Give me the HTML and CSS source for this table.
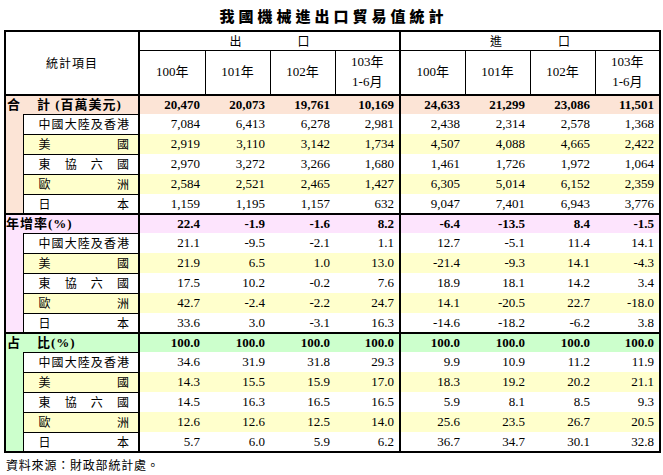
FILE: index.html
```html
<!DOCTYPE html>
<html lang="zh-Hant">
<head>
<meta charset="utf-8">
<title>我國機械進出口貿易值統計</title>
<link rel="stylesheet" href="styles.css">
</head>
<body>
<h1 class="title">我國機械進出口貿易值統計</h1>
<table class="stats">
  <colgroup>
    <col class="c-gut"><col class="c-lab"><col class="c-d1">
    <col class="c-d"><col class="c-d"><col class="c-d">
    <col class="c-d"><col class="c-d"><col class="c-d"><col class="c-d">
  </colgroup>
  <thead>
    <tr class="h1">
      <th colspan="2" rowspan="2" class="item">統計項目</th>
      <th colspan="4" class="grp div"><div class="pair"><span>出</span><span>口</span></div></th>
      <th colspan="4" class="grp"><div class="pair"><span>進</span><span>口</span></div></th>
    </tr>
    <tr class="h2">
      <th>100年</th><th>101年</th><th>102年</th><th class="div">103年<br>1-6月</th>
      <th>100年</th><th>101年</th><th>102年</th><th>103年<br>1-6月</th>
    </tr>
  </thead>
  <tbody>
    <tr class="sec total">
      <td colspan="2" class="seclab"><span class="k1">合</span>計 (百萬美元)</td>
      <td class="num">20,470</td><td class="num">20,073</td><td class="num">19,761</td><td class="num div">10,169</td>
      <td class="num">24,633</td><td class="num">21,299</td><td class="num">23,086</td><td class="num">11,501</td>
    </tr>
    <tr>
      <td rowspan="5" class="gut total"></td>
      <td class="lab"><div class="just"><span>中</span><span>國</span><span>大</span><span>陸</span><span>及</span><span>香</span><span>港</span></div></td>
      <td class="num">7,084</td><td class="num">6,413</td><td class="num">6,278</td><td class="num div">2,981</td>
      <td class="num">2,438</td><td class="num">2,314</td><td class="num">2,578</td><td class="num">1,368</td>
    </tr>
    <tr class="yel">
      <td class="lab"><div class="just"><span>美</span><span>國</span></div></td>
      <td class="num">2,919</td><td class="num">3,110</td><td class="num">3,142</td><td class="num div">1,734</td>
      <td class="num">4,507</td><td class="num">4,088</td><td class="num">4,665</td><td class="num">2,422</td>
    </tr>
    <tr>
      <td class="lab"><div class="just"><span>東</span><span>協</span><span>六</span><span>國</span></div></td>
      <td class="num">2,970</td><td class="num">3,272</td><td class="num">3,266</td><td class="num div">1,680</td>
      <td class="num">1,461</td><td class="num">1,726</td><td class="num">1,972</td><td class="num">1,064</td>
    </tr>
    <tr class="yel">
      <td class="lab"><div class="just"><span>歐</span><span>洲</span></div></td>
      <td class="num">2,584</td><td class="num">2,521</td><td class="num">2,465</td><td class="num div">1,427</td>
      <td class="num">6,305</td><td class="num">5,014</td><td class="num">6,152</td><td class="num">2,359</td>
    </tr>
    <tr>
      <td class="lab"><div class="just"><span>日</span><span>本</span></div></td>
      <td class="num">1,159</td><td class="num">1,195</td><td class="num">1,157</td><td class="num div">632</td>
      <td class="num">9,047</td><td class="num">7,401</td><td class="num">6,943</td><td class="num">3,776</td>
    </tr>

    <tr class="sec growth">
      <td colspan="2" class="seclab">年增率(%)</td>
      <td class="num">22.4</td><td class="num">-1.9</td><td class="num">-1.6</td><td class="num div">8.2</td>
      <td class="num">-6.4</td><td class="num">-13.5</td><td class="num">8.4</td><td class="num">-1.5</td>
    </tr>
    <tr>
      <td rowspan="5" class="gut growth"></td>
      <td class="lab"><div class="just"><span>中</span><span>國</span><span>大</span><span>陸</span><span>及</span><span>香</span><span>港</span></div></td>
      <td class="num">21.1</td><td class="num">-9.5</td><td class="num">-2.1</td><td class="num div">1.1</td>
      <td class="num">12.7</td><td class="num">-5.1</td><td class="num">11.4</td><td class="num">14.1</td>
    </tr>
    <tr class="yel">
      <td class="lab"><div class="just"><span>美</span><span>國</span></div></td>
      <td class="num">21.9</td><td class="num">6.5</td><td class="num">1.0</td><td class="num div">13.0</td>
      <td class="num">-21.4</td><td class="num">-9.3</td><td class="num">14.1</td><td class="num">-4.3</td>
    </tr>
    <tr>
      <td class="lab"><div class="just"><span>東</span><span>協</span><span>六</span><span>國</span></div></td>
      <td class="num">17.5</td><td class="num">10.2</td><td class="num">-0.2</td><td class="num div">7.6</td>
      <td class="num">18.9</td><td class="num">18.1</td><td class="num">14.2</td><td class="num">3.4</td>
    </tr>
    <tr class="yel">
      <td class="lab"><div class="just"><span>歐</span><span>洲</span></div></td>
      <td class="num">42.7</td><td class="num">-2.4</td><td class="num">-2.2</td><td class="num div">24.7</td>
      <td class="num">14.1</td><td class="num">-20.5</td><td class="num">22.7</td><td class="num">-18.0</td>
    </tr>
    <tr>
      <td class="lab"><div class="just"><span>日</span><span>本</span></div></td>
      <td class="num">33.6</td><td class="num">3.0</td><td class="num">-3.1</td><td class="num div">16.3</td>
      <td class="num">-14.6</td><td class="num">-18.2</td><td class="num">-6.2</td><td class="num">3.8</td>
    </tr>

    <tr class="sec share">
      <td colspan="2" class="seclab"><span class="k1">占</span>比(%)</td>
      <td class="num">100.0</td><td class="num">100.0</td><td class="num">100.0</td><td class="num div">100.0</td>
      <td class="num">100.0</td><td class="num">100.0</td><td class="num">100.0</td><td class="num">100.0</td>
    </tr>
    <tr>
      <td rowspan="5" class="gut share"></td>
      <td class="lab"><div class="just"><span>中</span><span>國</span><span>大</span><span>陸</span><span>及</span><span>香</span><span>港</span></div></td>
      <td class="num">34.6</td><td class="num">31.9</td><td class="num">31.8</td><td class="num div">29.3</td>
      <td class="num">9.9</td><td class="num">10.9</td><td class="num">11.2</td><td class="num">11.9</td>
    </tr>
    <tr class="yel">
      <td class="lab"><div class="just"><span>美</span><span>國</span></div></td>
      <td class="num">14.3</td><td class="num">15.5</td><td class="num">15.9</td><td class="num div">17.0</td>
      <td class="num">18.3</td><td class="num">19.2</td><td class="num">20.2</td><td class="num">21.1</td>
    </tr>
    <tr>
      <td class="lab"><div class="just"><span>東</span><span>協</span><span>六</span><span>國</span></div></td>
      <td class="num">14.5</td><td class="num">16.3</td><td class="num">16.5</td><td class="num div">16.5</td>
      <td class="num">5.9</td><td class="num">8.1</td><td class="num">8.5</td><td class="num">9.3</td>
    </tr>
    <tr class="yel">
      <td class="lab"><div class="just"><span>歐</span><span>洲</span></div></td>
      <td class="num">12.6</td><td class="num">12.6</td><td class="num">12.5</td><td class="num div">14.0</td>
      <td class="num">25.6</td><td class="num">23.5</td><td class="num">26.7</td><td class="num">20.5</td>
    </tr>
    <tr>
      <td class="lab"><div class="just"><span>日</span><span>本</span></div></td>
      <td class="num">5.7</td><td class="num">6.0</td><td class="num">5.9</td><td class="num div">6.2</td>
      <td class="num">36.7</td><td class="num">34.7</td><td class="num">30.1</td><td class="num">32.8</td>
    </tr>
  </tbody>
</table>
<p class="source">資料來源：財政部統計處。</p>
</body>
</html>
```

FILE: styles.css
```css
html, body {
  margin: 0;
  padding: 0;
  background: #fff;
}
body {
  padding: 0 4px;
  font-family: "Liberation Serif", "Noto Sans CJK TC", serif;
  color: #000;
}
.title {
  margin: 0;
  padding: 6px 0 0 4px;
  height: 24px;
  line-height: 20px;
  font-size: 15px;
  font-weight: 900;
  letter-spacing: 4px;
  text-align: center;
  font-family: "Noto Sans CJK TC", sans-serif;
}
.stats {
  border-collapse: collapse;
  table-layout: fixed;
  width: 655px;
  border: 2px solid #000;
  font-size: 13px;
}
.c-gut { width: 18px; }
.c-lab { width: 116px; }
.c-d1 { width: 66px; }
.c-d { width: 65px; }
.stats th, .stats td {
  padding: 0;
  line-height: 16px;
}
.stats thead th {
  border: 1px solid #000;
  font-weight: normal;
  text-align: center;
  vertical-align: middle;
  background: #fff;
}
.stats tr.h1 { height: 19px; }
.stats tr.h2 { height: 45px; }
.stats tr.h2 th {
  border-bottom: 2px solid #000;
  line-height: 20px;
}
.stats th.item {
  border-right: 2px solid #000;
  border-bottom: 2px solid #000;
  font-family: "Noto Sans CJK TC", sans-serif;
  font-size: 12px;
  letter-spacing: 1px;
}
.pair {
  display: flex;
  justify-content: center;
  gap: 56px;
  font-family: "Noto Sans CJK TC", sans-serif;
  font-size: 12px;
  line-height: 16px;
}
.stats .div {
  border-right: 2px solid #000;
}
.stats tbody tr { height: 20px; }
.stats tbody tr.sec { height: 19px; }
.stats td.num {
  text-align: right;
  padding-right: 5px;
  vertical-align: middle;
}
.sec td {
  border-top: 2px solid #000;
  font-weight: bold;
}
.seclab {
  border-right: 2px solid #000;
  padding-left: 2px;
  letter-spacing: 1px;
  white-space: nowrap;
}
.k1 {
  display: inline-block;
  width: 30px;
  padding-left: 1px;
}
.total { background: #fce4d6; }
.growth { background: #fde4fd; }
.share { background: #ccffcc; }
.yel td { background: #ffffcc; }
.gut { border-bottom: 2px solid #000; }
.stats td.lab {
  border: 1px solid #000;
  border-right: 2px solid #000;
  padding: 0 9px 0 15px;
  vertical-align: middle;
}
.just {
  display: flex;
  justify-content: space-between;
  font-family: "Noto Sans CJK TC", sans-serif;
  font-size: 12px;
  line-height: 16px;
}
.source {
  margin: 4px 0 0 2px;
  font-family: "Noto Sans CJK TC", sans-serif;
  font-size: 12px;
  letter-spacing: 0.8px;
  line-height: 16px;
}
```
